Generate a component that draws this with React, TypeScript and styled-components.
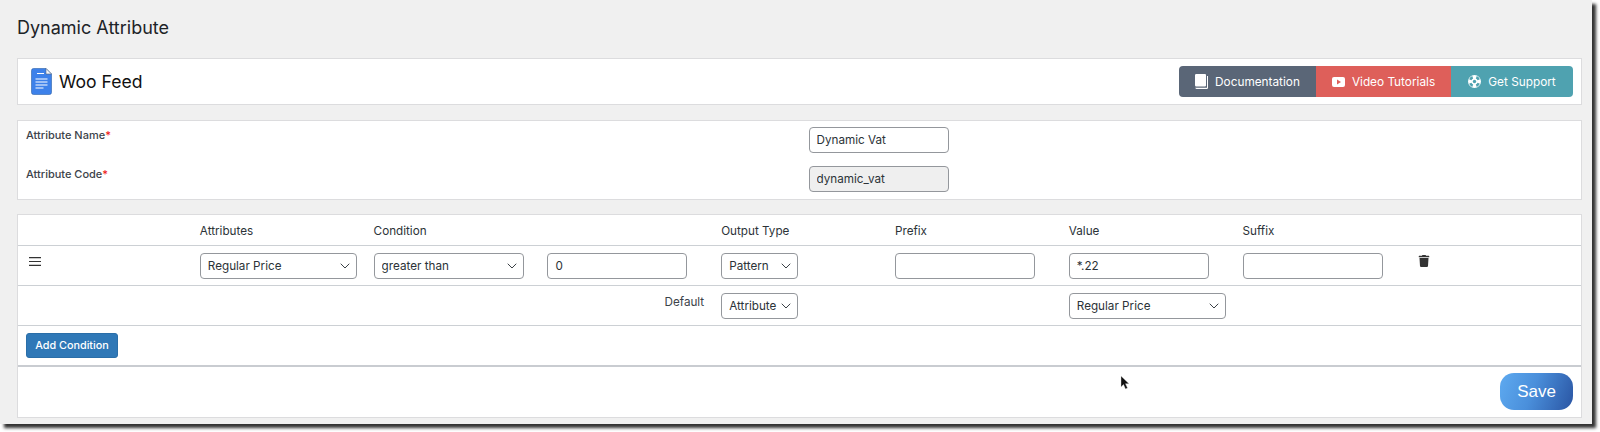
import React from "react";
import styled, { createGlobalStyle } from "styled-components";
import { ChevronDown } from "lucide-react";
import { FaTrash } from "react-icons/fa";

const Global = createGlobalStyle`
  html, body { margin: 0; padding: 0; background: #fff; min-height: 432px; }
  body { font-family: Inter, "Liberation Sans", sans-serif; color: #2c3338; }
  #root { height: 432px; overflow: hidden; }
  * { box-sizing: border-box; }
`;

const Frame = styled.div`
  position: relative;
  width: 1592px;
  height: 424px;
  background: #f0f0f0;
  box-shadow: 4px 4px 3px rgba(0, 0, 0, 0.8);
  padding: 0 10px 0 17px;
`;
const Title = styled.h1`
  margin: 0;
  height: 58px;
  padding-top: 16px;
  font-size: 18px;
  line-height: 24px;
  font-weight: 400;
  color: #1d2327;
`;
const Panel = styled.section<{ $mb?: number }>`
  background: #fff;
  border: 1px solid #dcdcde;
  margin-bottom: ${(p) => p.$mb ?? 15}px;
`;
const HeaderBar = styled(Panel)`
  height: 47px;
  display: flex;
  align-items: center;
  justify-content: space-between;
  padding: 0 8px 0 13px;
`;
const Brand = styled.div`
  display: flex;
  align-items: center;
  gap: 7px;
  font-size: 17.6px;
  color: #111;
`;
const ButtonGroup = styled.div`
  display: flex;
  height: 31px;
  border-radius: 4px;
  overflow: hidden;
`;
const LinkButton = styled.a<{ $bg: string; $w: number }>`
  display: flex;
  align-items: center;
  justify-content: center;
  gap: 7px;
  width: ${(p) => p.$w}px;
  background: ${(p) => p.$bg};
  color: #fff;
  font-size: 11.8px;
  svg { flex: none; }
`;
const FormRow = styled.div`
  display: grid;
  grid-template-columns: 1fr 1fr;
  height: 39px;
  padding-top: 6px;
`;
const FormLabel = styled.label`
  padding: 0 8px;
  font-size: 11px;
  line-height: 16px;
  font-weight: 500;
  color: #3c434a;
  em { color: #e11; font-style: normal; }
`;
const CellWrap = styled.div`
  padding-left: 9px;
`;
const Field = styled.input<{ $w?: number }>`
  display: block;
  width: ${(p) => p.$w ?? 140}px;
  height: 26px;
  padding: 0 7px;
  border: 1px solid #94979c;
  border-radius: 4px;
  background: #fff;
  color: #2c3338;
  font: 11.7px Inter, "Liberation Sans", sans-serif;
  &.locked { background: #efefef; }
`;
const Row = styled.div<{ $h: number }>`
  display: grid;
  grid-template-columns: repeat(9, 173.8px);
  height: ${(p) => p.$h}px;
  border-bottom: 1px solid #ccd0d4;
  font-size: 11.7px;
  align-items: start;
`;
const AddRow = styled.div`
  height: 41px;
  padding: 7px 8px;
  border-bottom: 2px solid #c9ccd1;
`;
const HeadCell = styled.div`
  padding: 8px 8px 0;
  line-height: 16px;
  color: #2c3338;
`;
const Cell = styled.div`
  padding: 7px 8px 0;
`;
const HandleCell = styled.div`
  padding: 11px 11px 0;
  line-height: 0;
`;
const TrashCell = styled.div`
  padding: 9px 10px 0;
  color: #333;
  line-height: 0;
`;
const DefaultLabel = styled.div`
  padding: 8px 9px 0 0;
  line-height: 16px;
  text-align: right;
  color: #3c434a;
`;
const SelectWrap = styled.div<{ $w: number }>`
  position: relative;
  width: ${(p) => p.$w}px;
  height: 26px;
  svg { position: absolute; right: 4px; top: 5px; color: #2c3338; pointer-events: none; }
`;
const NativeSelect = styled.select`
  display: block;
  appearance: none;
  width: 100%;
  height: 100%;
  padding: 0 7px;
  border: 1px solid #94979c;
  border-radius: 4px;
  background: #fff;
  color: #2c3338;
  font: 11.7px Inter, "Liberation Sans", sans-serif;
`;
const AddButton = styled.button`
  display: block;
  width: 92px;
  height: 25px;
  padding: 0;
  border: 1px solid #2a6ea8;
  border-radius: 3px;
  background: #2f78b7;
  color: #fff;
  font: 500 10.8px Inter, "Liberation Sans", sans-serif;
`;
const Footer = styled.div`
  display: flex;
  justify-content: flex-end;
  height: 50px;
  padding: 6px 8px 0 0;
`;
const SaveButton = styled.button`
  width: 73px;
  height: 37px;
  padding: 0;
  border: 0;
  border-radius: 14px;
  background: linear-gradient(110deg, #5eaaf0 0%, #4a8fdb 45%, #2a55a3 100%);
  color: #fff;
  font: 500 17px "Liberation Sans", Arial, sans-serif;
`;
const Cursor = styled.svg`
  position: absolute;
  left: 1120px;
  top: 376px;
`;

const Select = ({ w, value }: { w: number; value: string }) => (
  <SelectWrap $w={w}>
    <NativeSelect defaultValue={value}>
      <option>{value}</option>
    </NativeSelect>
    <ChevronDown size={16} strokeWidth={1.4} />
  </SelectWrap>
);

const DocIcon = () => (
  <svg width="21" height="27" viewBox="0 0 21 27">
    <path d="M2.500 .5H15L20.500 6V24.500a2 2 0 0 1-2 2H2.500a2 2 0 0 1-2-2V2.500a2 2 0 0 1 2-2z" fill="#3d81ea" stroke="#2b5fa8" strokeWidth=".6" />
    <path d="M15 .5V6h5.500z" fill="#f4f6fb" stroke="#55657d" strokeWidth=".6" />
    <path d="M6 5.500h7M4.500 11h12M4.500 14h12M4.500 17h12M4.500 20h8" stroke="#fff" strokeWidth="1.200" />
  </svg>
);

const BookIcon = () => (
  <svg width="13" height="15" viewBox="0 0 13 15" fill="#fff">
    <path d="M1.200 0H10a1 1 0 0 1 1 1v10.500a1 1 0 0 1-1 1H1.200a1.200 1.200 0 0 1-1.200-1.200V1.200A1.200 1.200 0 0 1 1.200 0z" />
    <path d="M12 2h1v11.800a1.200 1.200 0 0 1-1.200 1.200H1.500A1.500 1.500 0 0 1 .2 13.800H12z" />
  </svg>
);

const VideoIcon = () => (
  <svg width="13" height="10" viewBox="0 0 13 10">
    <rect width="13" height="10" rx="2" fill="#fff" />
    <path d="M5 2.500v5L9 5z" fill="#de5f5a" />
  </svg>
);

const SupportIcon = () => (
  <svg width="13" height="13" viewBox="0 0 13 13">
    <circle cx="6.500" cy="6.500" r="6.500" fill="#fff" />
    <circle cx="6.500" cy="6.500" r="1.700" fill="#4fa2b0" />
    <path d="M4.200 1.100a5.900 5.900 0 0 0-3.100 3.100l2.300 1a3.400 3.400 0 0 1 1.800-1.800zM8.800 1.100a5.900 5.900 0 0 1 3.100 3.100l-2.300 1a3.400 3.400 0 0 0-1.800-1.800zM4.200 11.900a5.900 5.900 0 0 1-3.100-3.100l2.300-1a3.400 3.400 0 0 0 1.800 1.800zM8.800 11.900a5.900 5.900 0 0 0 3.100-3.100l-2.300-1a3.400 3.400 0 0 1-1.800 1.800z" fill="#4fa2b0" />
  </svg>
);

const MenuIcon = () => (
  <svg width="12" height="9" viewBox="0 0 12 9" stroke="#333" strokeWidth="1.200">
    <path d="M0 .7h12M0 4.500h12M0 8.300h12" />
  </svg>
);

export default function App() {
  return (
    <>
      <Global />
      <Frame>
        <Title>Dynamic Attribute</Title>
        <HeaderBar>
          <Brand>
            <DocIcon />
            Woo Feed
          </Brand>
          <ButtonGroup>
            <LinkButton $bg="#5a6677" $w={137}><BookIcon />Documentation</LinkButton>
            <LinkButton $bg="#de5f5a" $w={135}><VideoIcon />Video Tutorials</LinkButton>
            <LinkButton $bg="#4fa2b0" $w={122}><SupportIcon />Get Support</LinkButton>
          </ButtonGroup>
        </HeaderBar>
        <Panel $mb={14}>
          <FormRow>
            <FormLabel>Attribute Name<em>*</em></FormLabel>
            <CellWrap><Field defaultValue="Dynamic Vat" /></CellWrap>
          </FormRow>
          <FormRow>
            <FormLabel>Attribute Code<em>*</em></FormLabel>
            <CellWrap><Field className="locked" readOnly defaultValue="dynamic_vat" /></CellWrap>
          </FormRow>
        </Panel>
        <Panel $mb={0}>
          <Row $h={31}>
            <HeadCell />
            <HeadCell>Attributes</HeadCell>
            <HeadCell>Condition</HeadCell>
            <HeadCell />
            <HeadCell>Output Type</HeadCell>
            <HeadCell>Prefix</HeadCell>
            <HeadCell>Value</HeadCell>
            <HeadCell>Suffix</HeadCell>
            <HeadCell />
          </Row>
          <Row $h={40}>
            <HandleCell><MenuIcon /></HandleCell>
            <Cell><Select w={157} value="Regular Price" /></Cell>
            <Cell><Select w={150} value="greater than" /></Cell>
            <Cell><Field $w={140} defaultValue="0" /></Cell>
            <Cell><Select w={77} value="Pattern" /></Cell>
            <Cell><Field $w={140} /></Cell>
            <Cell><Field $w={140} defaultValue="*.22" /></Cell>
            <Cell><Field $w={140} /></Cell>
            <TrashCell><FaTrash size={12} /></TrashCell>
          </Row>
          <Row $h={40}>
            <div />
            <div />
            <div />
            <DefaultLabel>Default</DefaultLabel>
            <Cell><Select w={77} value="Attribute" /></Cell>
            <div />
            <Cell><Select w={157} value="Regular Price" /></Cell>
            <div />
            <div />
          </Row>
          <AddRow><AddButton>Add Condition</AddButton></AddRow>
          <Footer><SaveButton>Save</SaveButton></Footer>
        </Panel>
        <Cursor width="10" height="14" viewBox="0 0 10 14">
          <path d="M1 0v11l2.500-2.500L5.500 13l2-1-2-4.300H9z" fill="#111" stroke="#ddd" strokeWidth=".4" />
        </Cursor>
      </Frame>
    </>
  );
}
